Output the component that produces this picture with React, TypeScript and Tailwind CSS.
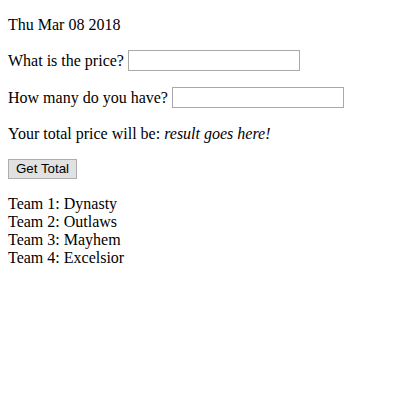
import React from "react";

const teams = ["Dynasty", "Outlaws", "Mayhem", "Excelsior"];

const App = () => {
  return (
    <div className="min-h-[400px] bg-white px-2 pt-[16px] text-[16px] leading-[18px] text-black font-['Liberation_Serif','Times_New_Roman',serif]">
      <p>Thu Mar 08 2018</p>
      <div className="mt-4 flex items-center gap-[4px]">
        <span>What is the price?</span>
        <input
          type="text"
          className="h-[21px] w-[172px] border border-[#a9a9a9] bg-white px-[2px] outline-none"
        />
      </div>
      <div className="mt-4 flex items-center gap-[4px]">
        <span>How many do you have?</span>
        <input
          type="text"
          className="h-[21px] w-[172px] border border-[#a9a9a9] bg-white px-[2px] outline-none"
        />
      </div>
      <p className="mt-[17px]">
        Your total price will be: <em className="italic">result goes here!</em>
      </p>
      <button className="mt-4 h-[20px] w-[69px] border border-[#adadad] bg-[#e1e1e1] text-[13.33px] leading-[16px] font-['Liberation_Sans',Arial,sans-serif]">
        Get Total
      </button>
      <ul className="mt-4">
        {teams.map((team, index) => (
          <li key={index}>
            Team {index + 1}: {team}
          </li>
        ))}
      </ul>
    </div>
  );
};

export default App;
